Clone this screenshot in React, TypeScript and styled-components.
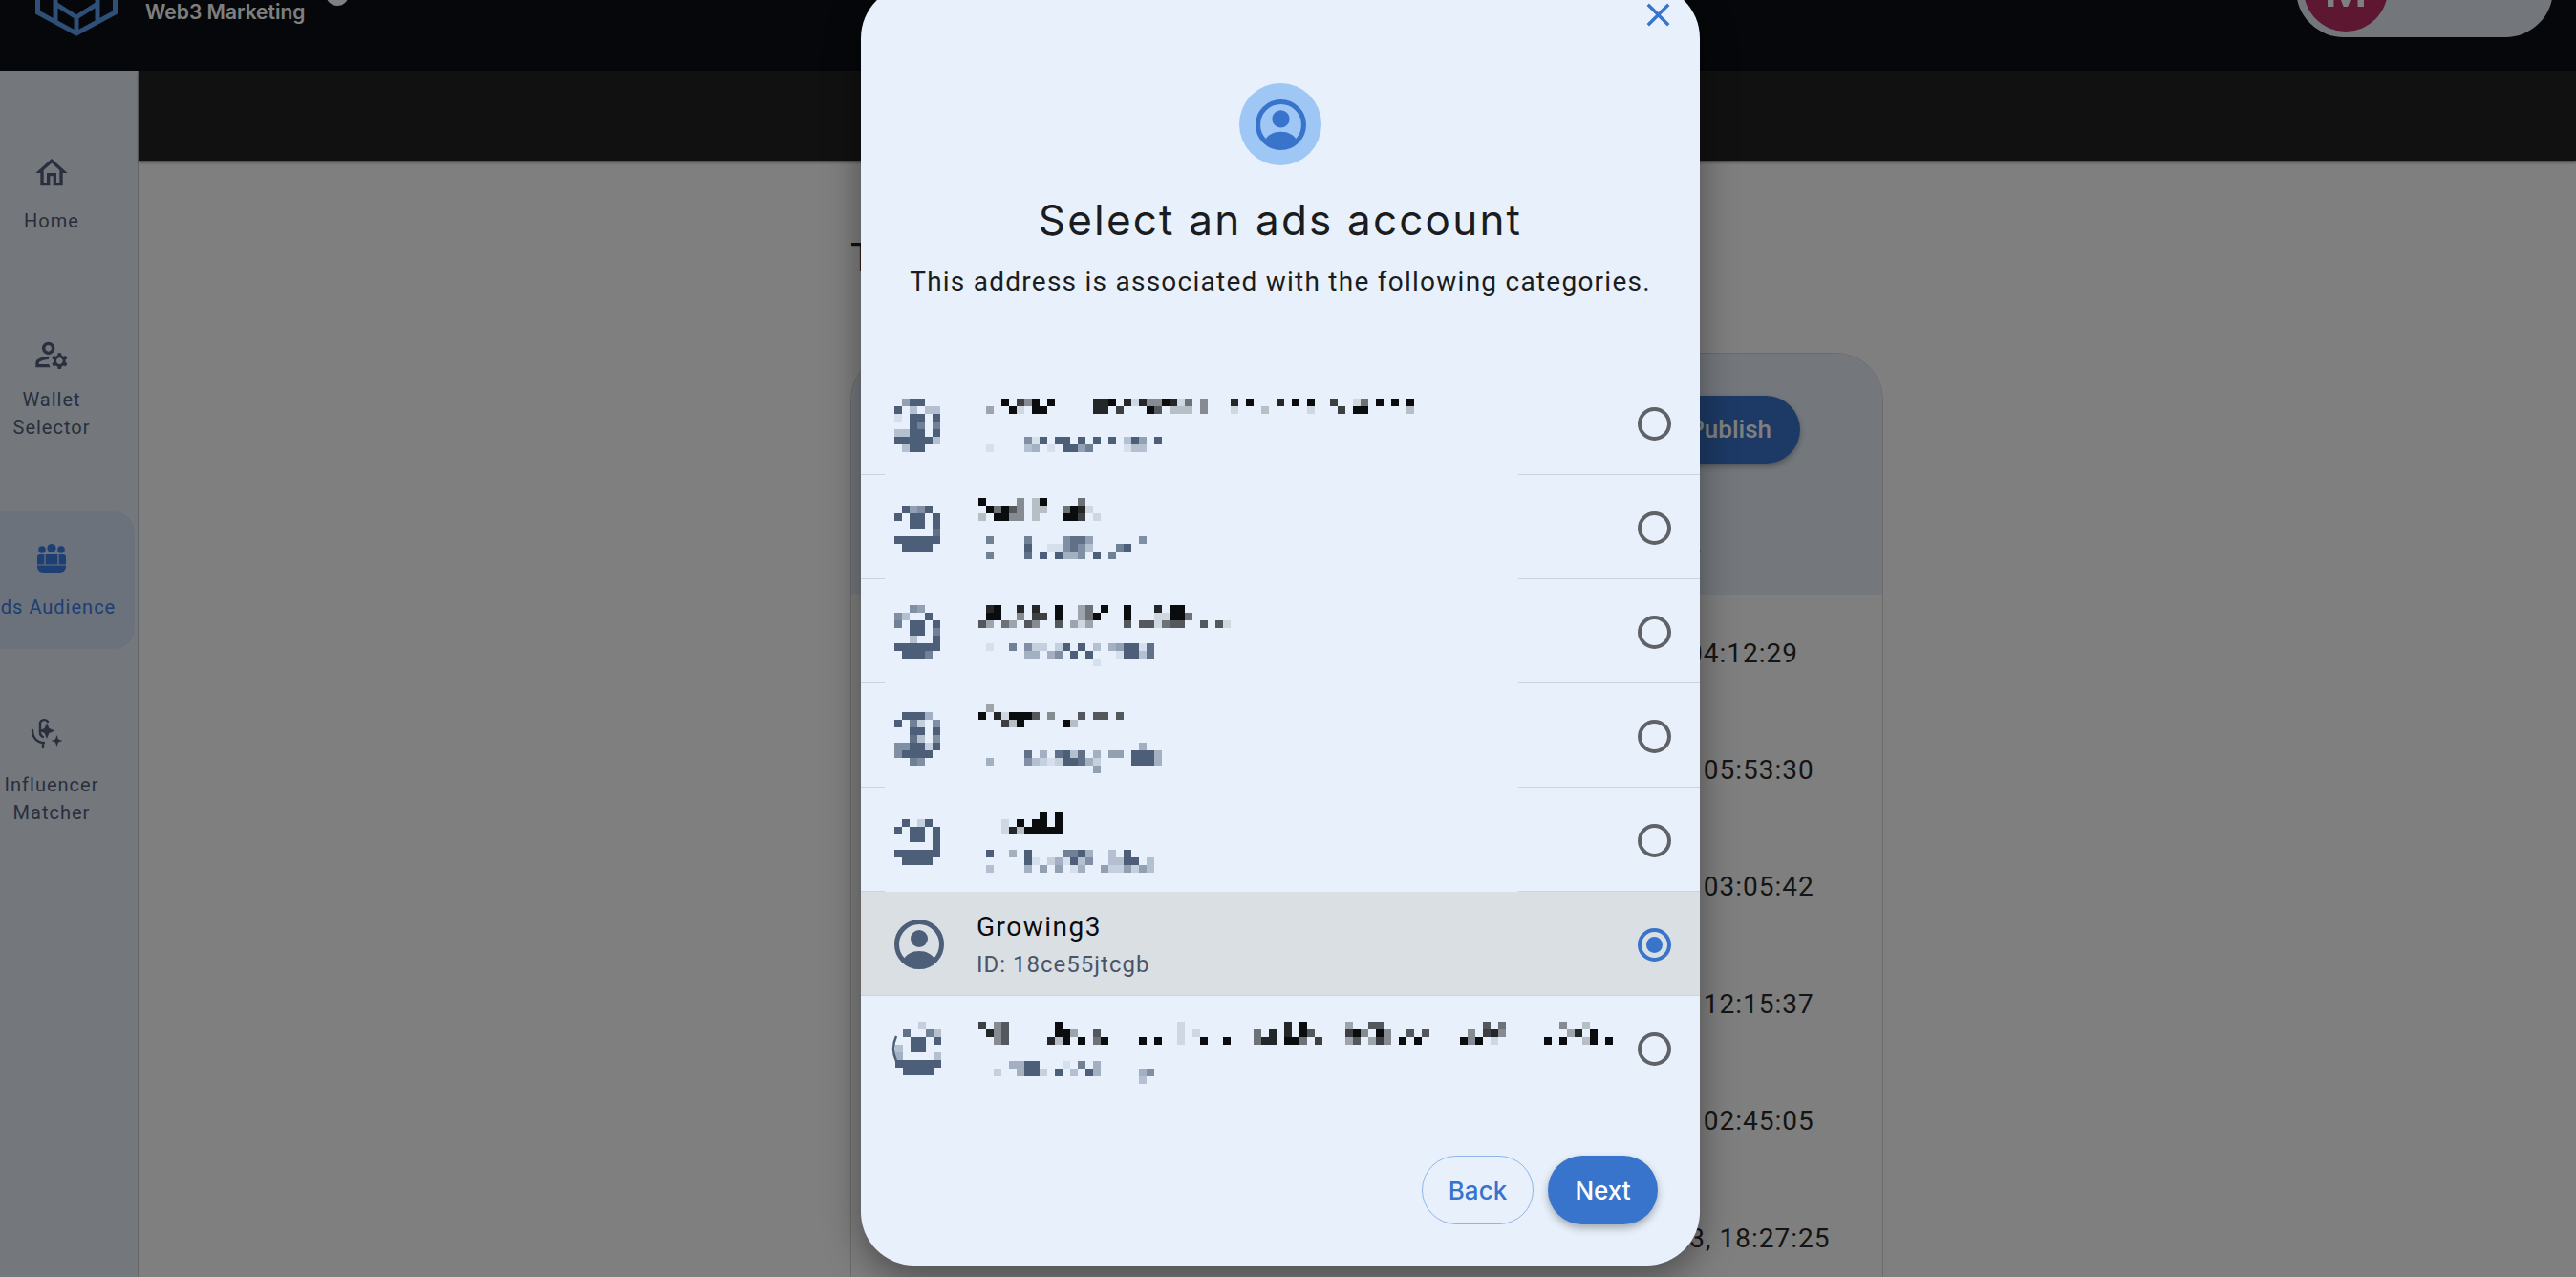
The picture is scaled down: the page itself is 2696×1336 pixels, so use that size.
import styled, { createGlobalStyle } from "styled-components";
import { MdClose, MdOutlineHome, MdOutlineManageAccounts } from "react-icons/md";

const SLATE = "#4d5f78";
const INK = "#0b0c0e";
const BLUE = "#3874cb";

type Cells = { col: number; y: number; rows: string[] };
type Redaction = { avatar: Cells; name: Cells; id: Cells; arc?: boolean };

// the pixelated (censored) accounts, one char per 8px block, digit = strength
const redactedRows: Redaction[] = [
  {
    avatar: { col: 0, y: 29, rows: [".599..", "9.3.33", "1.99.9", "..97.7", "3399.9", "999993", ".399.."] },
    name: {
      col: 12,
      y: 29,
      rows: [
        "..9.749.9.....889.818449815.4...8.9...8.9.9..7..15.9.9.9",
        "3..91.99......88.7...96.222.4...1...2.....1...7.99.....2",
      ],
    },
    id: { col: 12, y: 69, rows: [".....619.99.9.9.9.395.9", "1....34.1.9957....133"] },
  },
  {
    avatar: { col: 0, y: 32, rows: [".9569.", "9.99.9", "..99.9", ".....8", "999999", ".9999."] },
    name: { col: 11, y: 24, rows: ["9....4.29....5", ".95964.22..5981", "2.9944.2...997.1"] },
    id: { col: 12, y: 64, rows: ["7....7....6885......6", ".....9..116863...79", "7....8.9.9446.9.7"] },
  },
  {
    avatar: { col: 0, y: 27, rows: ["..65..", "63..9.", "7.99.9", "..99.7", "..3..9", "999999", ".9997."] },
    name: {
      col: 11,
      y: 27,
      rows: [".89..8.8..9..35.9..9...8.99", ".99..4.77.9..359...9...11995", "63.53.64..6.313....6.661566..6.61"],
    },
    id: { col: 12, y: 67, rows: ["1..7.622.29.9.3.459918", ".....44.46.9.9...19938", "..............1"] },
  },
  {
    avatar: { col: 0, y: 30, rows: [".9994.", "9.72.6", "..99.9", "..83.6", "669929", "69999.", "..76.."] },
    name: { col: 11, y: 22, rows: [".3", "9.819996.4...6.66.6", "...729.....92"] },
    id: {
      col: 12,
      y: 62,
      rows: ["....................4", ".....8.4.8938.4.55.9994", "4....6321299842....9994", "..............5"],
    },
  },
  {
    avatar: { col: 0, y: 33, rows: [".9.29.", "9.99.9", "..99.9", ".....9", "999999", ".9999."] },
    name: { col: 14, y: 25, rows: [".....9.9", "1.9.99.9", "18299999"] },
    id: { col: 12, y: 65, rows: ["9..4.9....7794..3.9", ".....91.241936..3399.3", "3....4.5.5.14..5225253"] },
  },
  {
    avatar: { col: 0.125, y: 26, rows: ["...2..", ".8..73", "..99.9", "3.99..", "4....3", "999999", ".9999."] },
    name: {
      col: 11,
      y: 26,
      rows: [
        "7.46......9...............1.............8.9.....3..66.............6.5.......4..2",
        ".846......993..6..........1.1.......5.8.8.96....794.94..6.6.....4.784........38.9",
        "..46.....829.9.59....9.9..1..9..9...588.995.7...36.374.9.9.....949.1......9.9..29.9",
      ],
    },
    id: { col: 13, y: 67, rows: ["..4499...1.7.4", "2..4992.9.3.94.....46", "...................3"] },
    arc: true,
  },
];

const times = [
  "1/2/2023, 04:12:29",
  "8/15/2023, 05:53:30",
  "8/21/2023, 03:05:42",
  "9/14/2023, 12:15:37",
  "9/22/2023, 02:45:05",
  "10/15/2023, 18:27:25",
];

const MosaicCells = ({ cells, color }: { cells: Cells; color: string }) => (
  <>
    {cells.rows.map((row, r) =>
      row.split("").map((ch, c) =>
        ch === "." ? null : (
          <rect
            key={`${r}-${c}`}
            x={10 + 8 * (cells.col + c)}
            y={cells.y + 8 * r}
            width={8}
            height={8}
            fill={color}
            opacity={Number(ch) / 9}
          />
        )
      )
    )}
  </>
);

const AccountIcon = ({ color, size }: { color: string; size: number }) => (
  <svg width={size} height={size} viewBox="0 0 52 52">
    <circle cx="26" cy="26" r="23.5" fill="none" stroke={color} strokeWidth="5" />
    <circle cx="26" cy="20" r="9" fill={color} />
    <path d="M9 43C12 36 19 33 26 33C33 33 40 36 43 43A24 24 0 0 1 9 43Z" fill={color} />
  </svg>
);

const GroupsIcon = () => (
  <svg width="40" height="36" viewBox="0 0 40 36">
    <g fill="#3a7ee6">
      <circle cx="10" cy="8" r="3.8" />
      <circle cx="20" cy="6.5" r="4.6" />
      <circle cx="30" cy="8" r="3.8" />
      <path d="M5 16a3 3 0 0 1 3-3h24a3 3 0 0 1 3 3v10a6 6 0 0 1-6 6H11a6 6 0 0 1-6-6Z" />
    </g>
    <path d="M13 13v11M27 13v11M5 24h30" stroke="#d6e4f8" strokeWidth="1.2" fill="none" />
  </svg>
);

const InfluencerIcon = () => (
  <svg width="40" height="36" viewBox="0 0 40 36" fill="none" overflow="visible">
    <g stroke="#525f7a" strokeWidth="2.4" strokeLinecap="round">
      <path d="M16 6a4.6 4.6 0 0 0-8 1v11a5 5 0 0 0 3 4" />
      <path d="M0 15c0 8 5 13 12 13M11 28v5" />
    </g>
    <path
      d="M15 7l2.4 6.1 6.1 2.4-6.1 2.4-2.4 6.1-2.4-6.1-6.1-2.4 6.1-2.4ZM25.5 20l1.6 4.4 4.4 1.6-4.4 1.6-1.6 4.4-1.6-4.4-4.4-1.6 4.4-1.6Z"
      fill="#525f7a"
    />
  </svg>
);

const LogoMark = () => (
  <svg width="86" height="40" viewBox="0 0 86 40" fill="none">
    <path
      d="M2.5 -6V13L43 35L83.5 13V-6M21 -6V22M65 -6V22M21 4L43 18M65 4L43 18M43 18V35"
      stroke="#5a9ef0"
      strokeWidth="5"
    />
  </svg>
);

export default function App() {
  return (
    <Page>
      <GlobalStyle />
      <TopBar>
        <LogoMark />
        <Brand>Web3 Marketing</Brand>
        <BrandDot />
        <UserPill>
          <UserAvatar>M</UserAvatar>
        </UserPill>
      </TopBar>

      <Body>
        <Sidebar>
          <NavItem $top={57}>
            <NavIcon>
              <MdOutlineHome size={40} />
            </NavIcon>
            <NavLabel>Home</NavLabel>
          </NavItem>
          <NavItem $top={46} $gap={15}>
            <NavIcon>
              <MdOutlineManageAccounts size={40} />
            </NavIcon>
            <NavLabel>
              Wallet
              <br />
              Selector
            </NavLabel>
          </NavItem>
          <NavItem $top={44} $active>
            <NavIcon>
              <GroupsIcon />
            </NavIcon>
            <NavLabel>Ads Audience</NavLabel>
          </NavItem>
          <NavItem $top={38} $gap={22}>
            <NavIcon>
              <InfluencerIcon />
            </NavIcon>
            <NavLabel>
              Influencer
              <br />
              Matcher
            </NavLabel>
          </NavItem>
        </Sidebar>

        <Main>
          <SubBar />
          <Content>
            <Heading>Target Audience</Heading>
            <Card>
              <CardHeader>
                <PublishButton>Publish</PublishButton>
                <ColumnLabel>Created Time</ColumnLabel>
              </CardHeader>
              {times.map((t) => (
                <TableRow key={t}>{t}</TableRow>
              ))}
            </Card>
          </Content>
        </Main>
      </Body>

      <Scrim />

      <Modal>
        <CloseButton>
          <MdClose size={41} />
        </CloseButton>
        <IconCircle>
          <AccountIcon color={BLUE} size={53} />
        </IconCircle>
        <Title>Select an ads account</Title>
        <Subtitle>This address is associated with the following categories.</Subtitle>

        <AccountList>
          {redactedRows.slice(0, 5).map((row, i) => (
            <AccountRow key={i}>
              <RedactedBlock row={row} />
              <Radio />
            </AccountRow>
          ))}
          <AccountRow $selected>
            <SelectedInfo>
              <AccountIcon color={SLATE} size={52} />
              <AccountText>
                <AccountName>Growing3</AccountName>
                <AccountId>ID: 18ce55jtcgb</AccountId>
              </AccountText>
            </SelectedInfo>
            <Radio $checked />
          </AccountRow>
          <AccountRow $last>
            <RedactedBlock row={redactedRows[5]} />
            <Radio />
          </AccountRow>
        </AccountList>

        <Footer>
          <BackButton>Back</BackButton>
          <NextButton>Next</NextButton>
        </Footer>
      </Modal>
    </Page>
  );
}

const RedactedBlock = ({ row }: { row: Redaction }) => (
  <Redacted width={663} height={109} shapeRendering="crispEdges">
    <MosaicCells cells={row.avatar} color={SLATE} />
    <MosaicCells cells={row.name} color={INK} />
    <MosaicCells cells={row.id} color={SLATE} />
    {row.arc && <path d="M12 41Q6 54 12 67" stroke={SLATE} strokeWidth="2.5" fill="none" shapeRendering="auto" />}
  </Redacted>
);

const GlobalStyle = createGlobalStyle`
  html, body {
    margin: 0;
    padding: 0;
    overflow: hidden;
    background: #fff;
  }
  * {
    box-sizing: border-box;
  }
`;

const Page = styled.div`
  position: relative;
  width: 2696px;
  height: 1336px;
  overflow: hidden;
  display: flex;
  flex-direction: column;
  font-family: Roboto, "Liberation Sans", sans-serif;
`;

const TopBar = styled.header`
  height: 74px;
  flex: none;
  display: flex;
  align-items: flex-start;
  padding-left: 37px;
  background: #0a0e14;
`;

const Brand = styled.div`
  margin: 0 0 0 29px;
  font-family: Inter, sans-serif;
  font-size: 21px;
  font-weight: 600;
  line-height: 26px;
  color: #fff;
`;

const BrandDot = styled.div`
  width: 24px;
  height: 24px;
  margin: -18px 0 0 22px;
  border-radius: 50%;
  background: #fff;
`;

const UserPill = styled.div`
  width: 269px;
  height: 100px;
  margin: -61px 24px 0 auto;
  padding: 6px 8px;
  border-radius: 50px;
  background: #e6eef8;
`;

const UserAvatar = styled.div`
  width: 88px;
  height: 88px;
  display: flex;
  align-items: center;
  justify-content: center;
  border-radius: 50%;
  background: #bc2e60;
  color: #fff;
  font-size: 52px;
  font-weight: 500;
`;

const Body = styled.div`
  flex: 1;
  min-height: 0;
  display: flex;
`;

const Sidebar = styled.nav`
  width: 145px;
  flex: none;
  overflow: hidden;
  display: flex;
  flex-direction: column;
  background: #e8f1fb;
  border-right: 1px solid #c4cad2;
`;

const NavItem = styled.div<{ $top: number; $gap?: number; $active?: boolean }>`
  width: 174px;
  margin: ${(p) => p.$top}px 0 0 -33px;
  padding: 32px 0 29px;
  flex: none;
  display: flex;
  flex-direction: column;
  align-items: center;
  gap: ${(p) => p.$gap ?? 18}px;
  border-radius: 22px;
  background: ${(p) => (p.$active ? "#d6e4f8" : "transparent")};
  color: ${(p) => (p.$active ? "#3a7ee6" : "#525f7a")};
`;

const NavIcon = styled.div`
  height: 36px;
  display: flex;
  align-items: center;
  justify-content: center;
`;

const NavLabel = styled.div`
  font-size: 20px;
  line-height: 29px;
  letter-spacing: 1px;
  text-align: center;
  white-space: nowrap;
`;

const Main = styled.main`
  flex: 1;
  min-width: 0;
  display: flex;
  flex-direction: column;
  background: #fff;
`;

const SubBar = styled.div`
  height: 94px;
  flex: none;
  background: #222;
  box-shadow: 0 2px 3px rgba(0, 0, 0, 0.4);
`;

const Content = styled.div`
  padding: 80px 0 0 745px;
`;

const Heading = styled.h1`
  margin: 0 0 77px;
  font-size: 40px;
  font-weight: 400;
  line-height: 44px;
  color: #222;
`;

const Card = styled.section`
  width: 1081px;
  border: 1px solid #d6d6d6;
  border-bottom: none;
  border-radius: 50px 50px 0 0;
  overflow: hidden;
`;

const CardHeader = styled.div`
  height: 252px;
  padding-top: 44px;
  display: flex;
  flex-direction: column;
  background: #e8f1fb;
`;

const PublishButton = styled.button`
  width: 170px;
  height: 71px;
  margin: 0 86px 0 auto;
  padding: 0 30px 2px 0;
  border: none;
  border-radius: 36px;
  background: ${BLUE};
  color: #fff;
  font-family: Roboto, sans-serif;
  font-size: 26px;
  font-weight: 500;
  text-align: right;
  box-shadow: 0 3px 6px rgba(0, 0, 0, 0.3);
`;

const ColumnLabel = styled.div`
  margin: 71px 0 0 710px;
  font-size: 28px;
  font-weight: 500;
  line-height: 40px;
  letter-spacing: 1px;
  color: #2a2a2a;
`;

const TableRow = styled.div`
  height: 122.4px;
  padding-left: 735px;
  display: flex;
  align-items: center;
  font-size: 28px;
  letter-spacing: 1px;
  color: #2a2a2a;
`;

const Scrim = styled.div`
  position: absolute;
  inset: 0;
  background: rgba(0, 0, 0, 0.5);
`;

const Modal = styled.div`
  position: absolute;
  top: -16px;
  left: 901px;
  width: 878px;
  height: 1340px;
  padding-top: 103px;
  display: flex;
  flex-direction: column;
  align-items: center;
  border-radius: 56px;
  background: #e8f1fb;
  box-shadow: 0 12px 38px rgba(0, 0, 0, 0.4);
`;

const CloseButton = styled.div`
  position: absolute;
  top: 11px;
  right: 23px;
  display: flex;
  color: ${BLUE};
`;

const IconCircle = styled.div`
  width: 86px;
  height: 86px;
  display: flex;
  align-items: center;
  justify-content: center;
  border-radius: 50%;
  background: #9ec7f5;
`;

const Title = styled.h2`
  margin: 32px 0 0;
  font-family: Inter, sans-serif;
  font-size: 44px;
  font-weight: 400;
  line-height: 50px;
  letter-spacing: 2.2px;
  color: #1a1c20;
`;

const Subtitle = styled.p`
  margin: 20px 0 0;
  font-size: 28px;
  line-height: 40px;
  letter-spacing: 1.25px;
  color: #1a1c20;
`;

const AccountList = styled.div`
  width: 100%;
  margin-top: 73px;
  display: flex;
  flex-direction: column;
`;

const AccountRow = styled.div<{ $selected?: boolean; $last?: boolean }>`
  height: 109px;
  display: flex;
  align-items: center;
  justify-content: space-between;
  padding-right: 30px;
  background: ${(p) => (p.$selected ? "#dadfe3" : "transparent")};
  border-bottom: ${(p) => (p.$last ? "none" : "1px solid #cdd3dc")};
`;

const Redacted = styled.svg`
  flex: none;
  margin: 0 0 -1px 25px;
  background: #e8f1fb;
  overflow: visible;
`;

const SelectedInfo = styled.div`
  margin: 2px 0 0 35px;
  display: flex;
  align-items: center;
  gap: 34px;
`;

const AccountText = styled.div`
  display: flex;
  flex-direction: column;
  gap: 7px;
  padding-top: 3px;
`;

const AccountName = styled.div`
  font-size: 28px;
  line-height: 32px;
  letter-spacing: 1.5px;
  color: ${INK};
`;

const AccountId = styled.div`
  font-size: 24px;
  font-weight: 400;
  line-height: 32px;
  letter-spacing: 1px;
  color: #4a5568;
`;

const Radio = styled.span<{ $checked?: boolean }>`
  width: 35px;
  height: 35px;
  margin-top: 2px;
  flex: none;
  display: flex;
  align-items: center;
  justify-content: center;
  border: 4px solid ${(p) => (p.$checked ? BLUE : "#5f6368")};
  border-radius: 50%;

  &::after {
    content: "";
    display: ${(p) => (p.$checked ? "block" : "none")};
    width: 17px;
    height: 17px;
    border-radius: 50%;
    background: ${BLUE};
  }
`;

const Footer = styled.div`
  width: 100%;
  margin-top: 58px;
  padding-right: 44px;
  display: flex;
  justify-content: flex-end;
  gap: 15px;
`;

const BackButton = styled.button`
  width: 117px;
  height: 72px;
  border: 1px solid #8fb5e8;
  border-radius: 36px;
  background: transparent;
  color: ${BLUE};
  font-family: Inter, sans-serif;
  font-size: 26px;
  font-weight: 500;
`;

const NextButton = styled(BackButton)`
  width: 115px;
  border: none;
  background: ${BLUE};
  color: #fff;
  box-shadow: 0 4px 8px rgba(0, 0, 0, 0.3);
`;
